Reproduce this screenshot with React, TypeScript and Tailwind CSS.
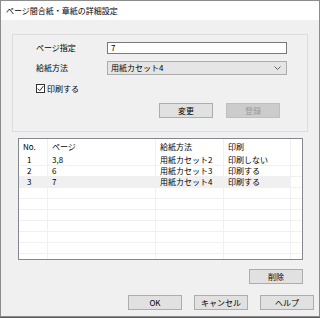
import React from "react";

const font = { fontFamily: '"Noto Sans CJK JP", "Noto Sans", sans-serif' };

function Btn({ children, disabled, className = "" }: { children: React.ReactNode; disabled?: boolean; className?: string }) {
  return (
    <div
      className={
        "w-[54px] h-[15px] flex items-center justify-center text-[8px] leading-none border " +
        (disabled ? "bg-[#cccccc] border-[#bfbfbf] text-[#9a9a9a] " : "bg-[#e1e1e1] border-[#adadad] text-black ") +
        className
      }
    >
      {children}
    </div>
  );
}

const rows = [
  ["1", "3,8", "用紙カセット2", "印刷しない"],
  ["2", "6", "用紙カセット3", "印刷する"],
  ["3", "7", "用紙カセット4", "印刷する"],
];

function Row({ cells, hl, header }: { cells: string[]; hl?: boolean; header?: boolean }) {
  const widths = ["w-[29px]", "w-[108px]", "w-[68px]", "w-[67px]", "flex-1"];
  return (
    <div className={"flex shrink-0 " + (header ? "h-[16px]" : "h-[11px] border-b border-[#f0f0f0]")}>
      {widths.map((w, i) => (
        <div
          key={i}
          className={
            w +
            " h-full flex items-center text-[8px] leading-none whitespace-nowrap " +
            (i === 0 && !header ? "pl-[8px] " : "pl-[4px] ") +
            (i < 4 ? "border-r border-[#f0f0f0] " : "") +
            (hl && i < 4 ? "bg-[#f0f0f0] " : "")
          }
        >
          {cells[i] ?? ""}
        </div>
      ))}
    </div>
  );
}

export default function App() {
  const empty = Array.from({ length: 8 }, () => ["", "", "", ""]);
  return (
    <div className="w-[320px] h-[318px] bg-[#5a5a5a]" style={font}>
      <div className="w-[320px] h-[317px] border border-[#8c8c8c] bg-[#f0f0f0] flex flex-col text-black">
        <div className="h-[19px] bg-white flex items-center pl-[5px] text-[8px] leading-none shrink-0">
          ページ間合紙・章紙の詳細設定
        </div>
        <div className="ml-[11px] mt-[14px] w-[296px] h-[98px] border border-[#dcdcdc] flex flex-col shrink-0">
          <div className="flex items-center mt-[7px] h-[12px]">
            <div className="w-[94px] pl-[23px] text-[8px] leading-none">ページ指定</div>
            <div className="w-[180px] h-[12px] bg-white border border-[#7a7a7a] flex items-center pl-[3px] text-[8px] leading-none">
              7
            </div>
          </div>
          <div className="flex items-center mt-[7px] h-[14px]">
            <div className="w-[94px] pl-[23px] text-[8px] leading-none">給紙方法</div>
            <div className="w-[180px] h-[14px] bg-[#e5e5e5] border border-[#acacac] flex items-center justify-between pl-[3px] pr-[5px] text-[8px] leading-none">
              <span>用紙カセット4</span>
              <svg width="7" height="4" viewBox="0 0 7 4">
                <path d="M0.5 0.5 L3.5 3.5 L6.5 0.5" fill="none" stroke="#606060" strokeWidth="1" />
              </svg>
            </div>
          </div>
          <div className="flex items-center mt-[9px] h-[9px] pl-[23px]">
            <div className="w-[9px] h-[9px] bg-white border border-[#333] flex items-center justify-center">
              <svg width="7" height="7" viewBox="0 0 7 7">
                <path d="M0.8 3.6 L2.8 5.6 L6.3 1.2" fill="none" stroke="#222" strokeWidth="1" />
              </svg>
            </div>
            <span className="ml-[2px] text-[8px] leading-none">印刷する</span>
          </div>
          <div className="flex mt-[10px] pl-[146px] gap-[13px]">
            <Btn>変更</Btn>
            <Btn disabled>登録</Btn>
          </div>
        </div>
        <div className="ml-[17px] mt-[6px] w-[285px] h-[122px] border border-[#828790] bg-white flex flex-col overflow-hidden shrink-0">
          <Row header cells={["No.", "ページ", "給紙方法", "印刷"]} />
          {rows.map((r, i) => (
            <Row key={i} cells={r} hl={i === 2} />
          ))}
          {empty.map((r, i) => (
            <Row key={"e" + i} cells={r} />
          ))}
        </div>
        <div className="flex justify-end mt-[9px] pr-[16px] shrink-0">
          <Btn>削除</Btn>
        </div>
        <div className="flex justify-end mt-[11px] pr-[5px] gap-[12px] shrink-0">
          <Btn>OK</Btn>
          <Btn>キャンセル</Btn>
          <Btn>ヘルプ</Btn>
        </div>
      </div>
    </div>
  );
}
